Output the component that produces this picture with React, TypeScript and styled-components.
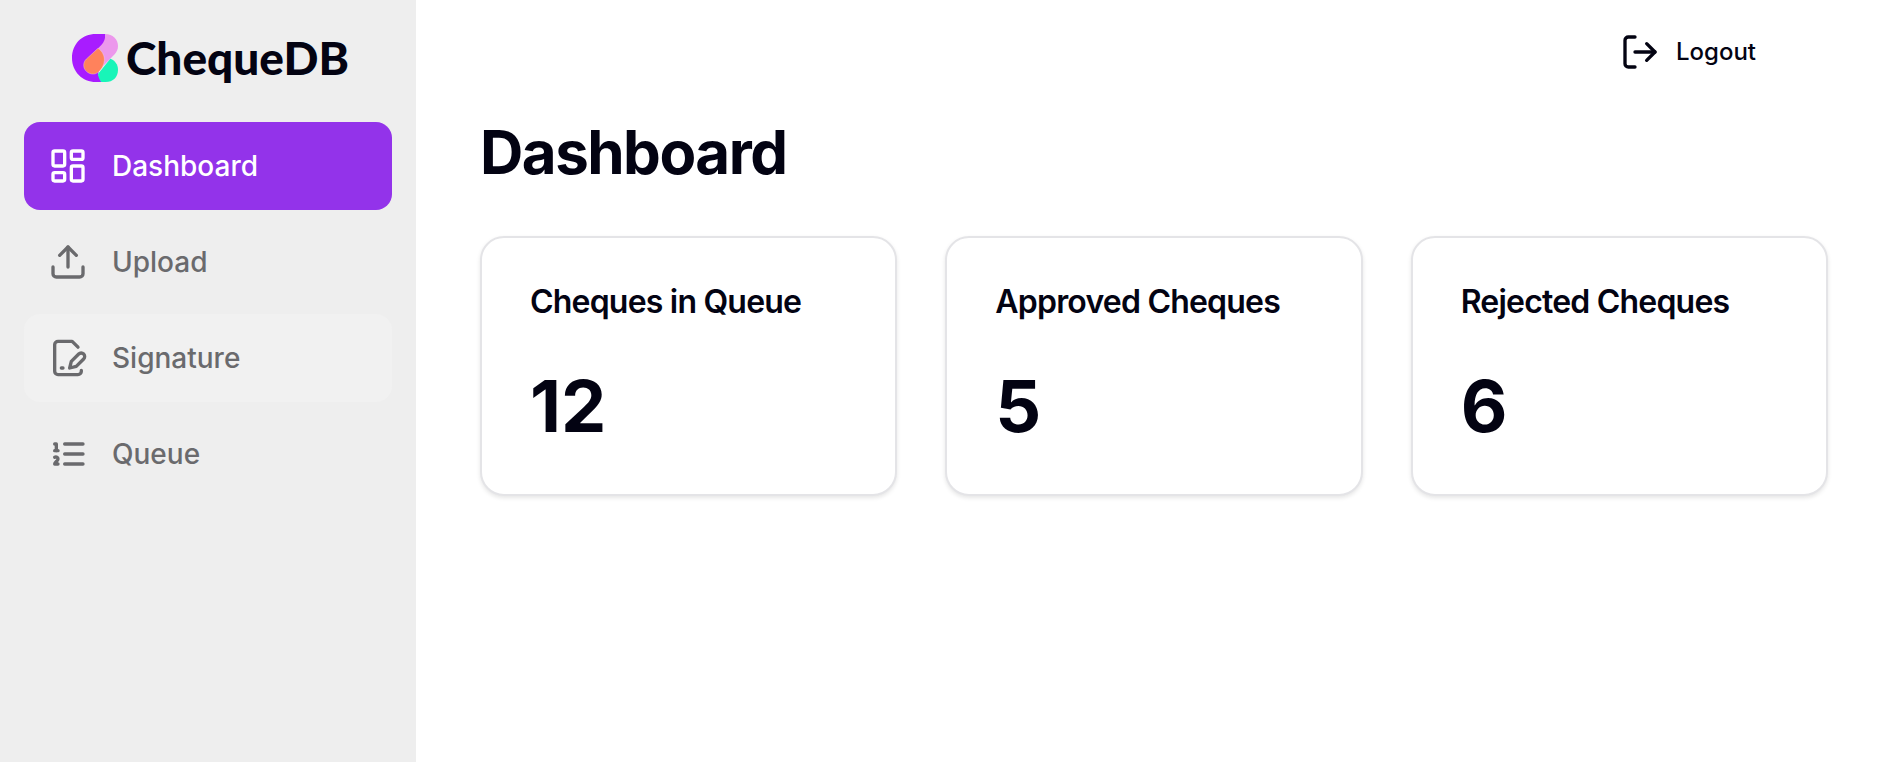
import React from "react";
import styled, { createGlobalStyle } from "styled-components";

const GlobalStyle = createGlobalStyle`
  *, *::before, *::after { box-sizing: border-box; }
  body {
    margin: 0;
    background: #ffffff;
    color: #030312;
    font-family: Inter, "Liberation Sans", sans-serif;
  }
`;

const Shell = styled.div`
  display: flex;
  min-height: 100vh;
`;

const Sidebar = styled.aside`
  flex: 0 0 416px;
  padding: 24px;
  background: #eeeeee;
`;

const Brand = styled.a`
  display: flex;
  align-items: center;
  gap: 8px;
  height: 68px;
  margin-bottom: 30px;
  padding-left: 48px;
  color: #030312;
  text-decoration: none;
`;

const BrandMark = styled.svg`
  flex: none;
  width: 46px;
  height: 48px;
`;

const BrandName = styled.span`
  font-family: Lato, sans-serif;
  font-size: 46px;
  font-weight: 900;
  line-height: 56px;
`;

const Nav = styled.nav`
  display: flex;
  flex-direction: column;
  gap: 8px;
`;

const NavLink = styled.a<{ $state?: "active" | "hover" }>`
  display: flex;
  align-items: center;
  gap: 24px;
  height: 88px;
  padding: 0 24px;
  border-radius: 16px;
  font-size: 28px;
  font-weight: 500;
  line-height: 40px;
  text-decoration: none;
  color: ${({ $state }) => ($state === "active" ? "#ffffff" : "#6a6a6d")};
  background: ${({ $state }) =>
    $state === "active" ? "#9333ea" : $state === "hover" ? "#f1f1f1" : "transparent"};

  &:hover {
    background: ${({ $state }) => ($state === "active" ? "#9333ea" : "#f1f1f1")};
  }
`;

const IconSvg = styled.svg`
  flex: none;
  width: 40px;
  height: 40px;
  fill: none;
  stroke: currentColor;
  stroke-width: 2;
  stroke-linecap: round;
  stroke-linejoin: round;
`;

const Content = styled.div`
  flex: 1;
  min-width: 0;
`;

const TopBar = styled.header`
  display: flex;
  justify-content: flex-end;
  padding: 24px 96px 24px 64px;
`;

const LogoutButton = styled.button`
  display: flex;
  align-items: center;
  gap: 16px;
  height: 56px;
  padding: 0 40px;
  border: 0;
  border-radius: 12px;
  background: transparent;
  color: inherit;
  font-family: inherit;
  font-size: 24px;
  font-weight: 500;
  line-height: 40px;
  cursor: pointer;
`;

const Main = styled.main`
  padding: 12px 64px 64px;
`;

const Title = styled.h1`
  margin: 0 0 48px;
  font-size: 60px;
  font-weight: 700;
  line-height: 72px;
  letter-spacing: -0.025em;
`;

const Cards = styled.div`
  display: grid;
  grid-template-columns: repeat(3, minmax(0, 1fr));
  gap: 48px;
`;

const Card = styled.section`
  display: flex;
  flex-direction: column;
  gap: 48px;
  padding: 48px;
  border: 2px solid #e4e4e7;
  border-radius: 24px;
  background: #ffffff;
  box-shadow: 0 2px 4px rgba(0, 0, 0, 0.1);
`;

const CardTitle = styled.h2`
  margin: 0;
  font-size: 32px;
  font-weight: 600;
  line-height: 32px;
  letter-spacing: -0.025em;
  white-space: nowrap;
`;

const CardValue = styled.p`
  margin: 0;
  font-size: 72px;
  font-weight: 700;
  line-height: 80px;
`;

const Icon = ({ children }: { children: React.ReactNode }) => (
  <IconSvg viewBox="0 0 24 24" aria-hidden="true">
    {children}
  </IconSvg>
);

const navItems: {
  label: string;
  state?: "active" | "hover";
  icon: React.ReactNode;
}[] = [
  {
    label: "Dashboard",
    state: "active",
    icon: (
      <>
        <rect x="3" y="3" width="7" height="9" rx="1" />
        <rect x="14" y="3" width="7" height="5" rx="1" />
        <rect x="14" y="12" width="7" height="9" rx="1" />
        <rect x="3" y="16" width="7" height="5" rx="1" />
      </>
    ),
  },
  {
    label: "Upload",
    icon: (
      <>
        <path d="M21 15v4a2 2 0 0 1-2 2H5a2 2 0 0 1-2-2v-4" />
        <path d="m17 8-5-5-5 5" />
        <path d="M12 3v12" />
      </>
    ),
  },
  {
    label: "Signature",
    state: "hover",
    icon: (
      <>
        <path d="M20 19.5v.5a2 2 0 0 1-2 2H6a2 2 0 0 1-2-2V4a2 2 0 0 1 2-2h8.5L18 5.5" />
        <path d="M8 18h1" />
        <path d="M18.42 9.61a2.1 2.1 0 1 1 2.97 2.97L16.95 17 13 18l.99-3.95 4.43-4.44Z" />
      </>
    ),
  },
  {
    label: "Queue",
    icon: (
      <>
        <path d="M10 6h11M10 12h11M10 18h11" />
        <path d="M4 6h1v4" />
        <path d="M4 10h2" />
        <path d="M6 18H4c0-1 2-2 2-3s-1-1.5-2-1" />
      </>
    ),
  },
];

const stats = [
  { label: "Cheques in Queue", value: 12 },
  { label: "Approved Cheques", value: 5 },
  { label: "Rejected Cheques", value: 6 },
];

export default function App() {
  return (
    <>
      <GlobalStyle />
      <Shell>
        <Sidebar>
          <Brand href="#">
            <BrandMark viewBox="0 0 138 144" aria-hidden="true">
              <path fill="#a81cff" d="M100 0H72C29 0 0 31 0 72s31 72 72 72h16L78 120 100 60Z" />
              <path fill="#ec98ec" d="M100 0C122 0 138 15 138 36c0 10-4 18-10 25L84 106 70 51 88 33C96 25 101 12 100 0Z" />
              <path fill="#18f5b8" d="M115 74C130 80 138 92 138 107c0 22-15 37-37 37H88C82 137 79 130 78 120Z" />
              <path fill="#ff825c" stroke="#eeeeee" strokeOpacity="0.5" strokeWidth="2" d="M78 43C91 51 98 66 97 80c-1 13-8 27-19 35C64 128 35 116 35 94c0-8 3-14 8-19Z" />
            </BrandMark>
            <BrandName>ChequeDB</BrandName>
          </Brand>
          <Nav aria-label="Main">
            {navItems.map((item) => (
              <NavLink
                key={item.label}
                href="#"
                $state={item.state}
                aria-current={item.state === "active" ? "page" : undefined}
              >
                <Icon>{item.icon}</Icon>
                {item.label}
              </NavLink>
            ))}
          </Nav>
        </Sidebar>
        <Content>
          <TopBar>
            <LogoutButton type="button">
              <Icon>
                <path d="M9 21H5a2 2 0 0 1-2-2V5a2 2 0 0 1 2-2h4" />
                <path d="m16 17 5-5-5-5" />
                <path d="M21 12H9" />
              </Icon>
              Logout
            </LogoutButton>
          </TopBar>
          <Main>
            <Title>Dashboard</Title>
            <Cards>
              {stats.map((stat) => (
                <Card key={stat.label}>
                  <CardTitle>{stat.label}</CardTitle>
                  <CardValue>{stat.value}</CardValue>
                </Card>
              ))}
            </Cards>
          </Main>
        </Content>
      </Shell>
    </>
  );
}
